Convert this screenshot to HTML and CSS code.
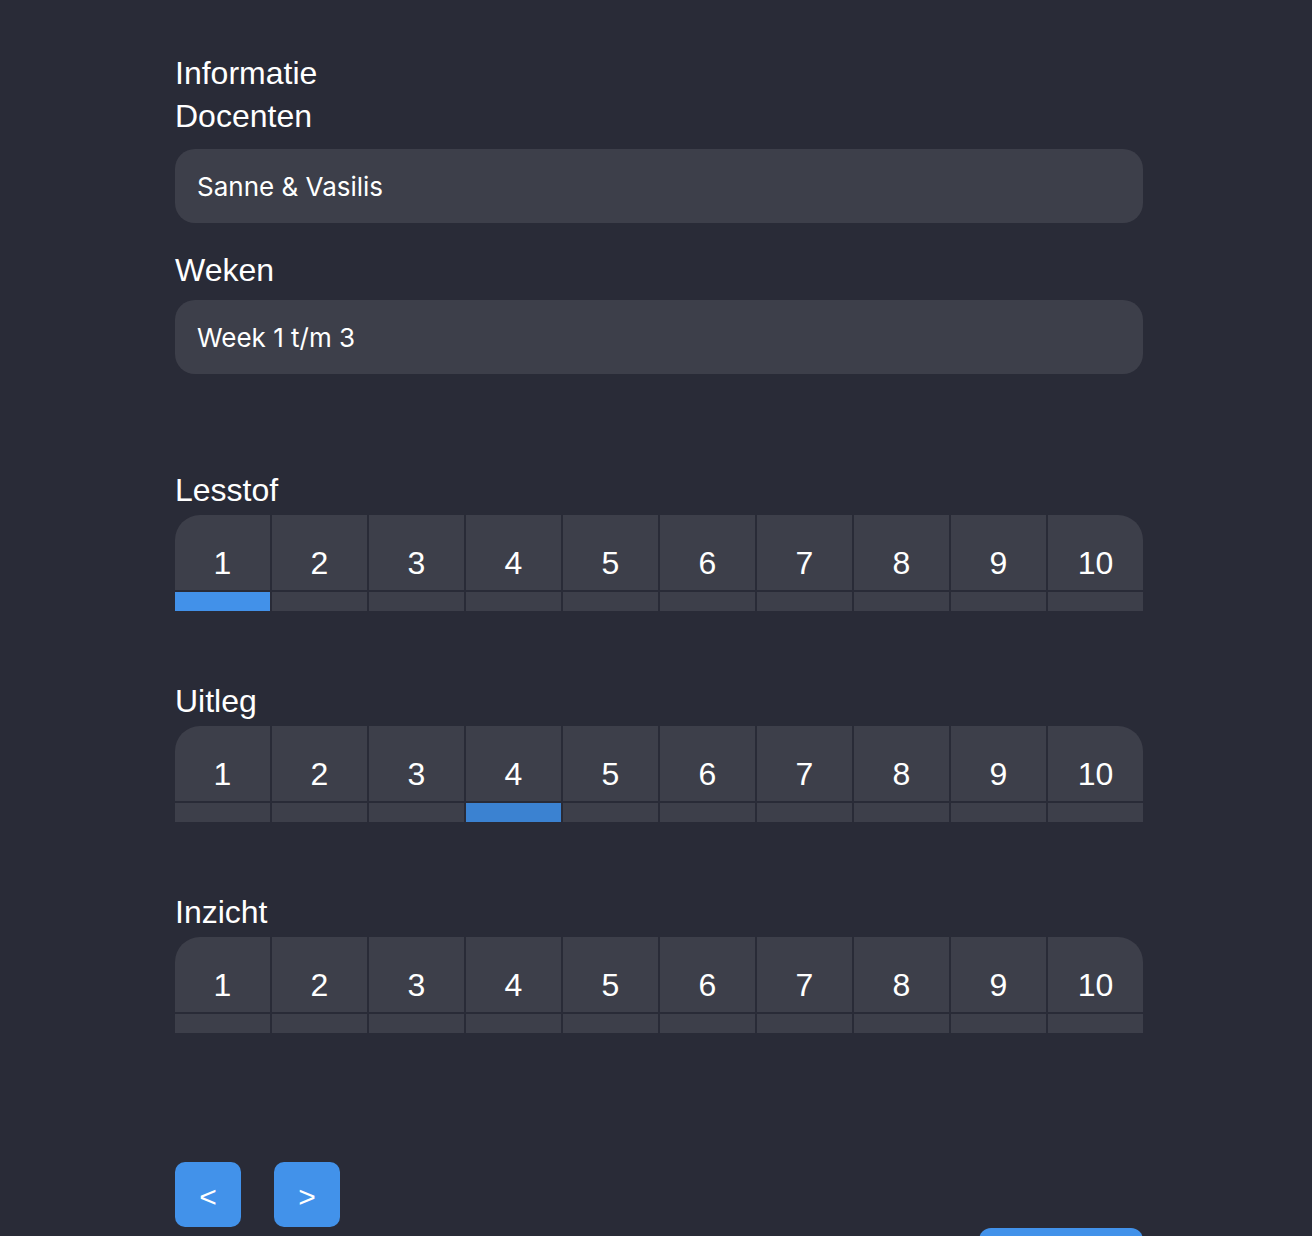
FILE: index.html
```html
<!DOCTYPE html>
<html lang="nl">
<head>
<meta charset="utf-8">
<title>Informatie</title>
<link rel="stylesheet" href="styles.css">
</head>
<body>
<main class="page">
  <h2 class="heading">Informatie</h2>
  <div class="field-group field-group--first">
    <div class="label">Docenten</div>
    <div class="field">Sanne &amp; Vasilis</div>
  </div>
  <div class="field-group">
    <div class="label">Weken</div>
    <div class="field">Week 1 t/m 3</div>
  </div>

  <section class="rating rating--first">
    <div class="label label--scale">Lesstof</div>
    <div class="scale">
      <div class="step selected"><div class="num">1</div><div class="bar"></div></div>
      <div class="step"><div class="num">2</div><div class="bar"></div></div>
      <div class="step"><div class="num">3</div><div class="bar"></div></div>
      <div class="step"><div class="num">4</div><div class="bar"></div></div>
      <div class="step"><div class="num">5</div><div class="bar"></div></div>
      <div class="step"><div class="num">6</div><div class="bar"></div></div>
      <div class="step"><div class="num">7</div><div class="bar"></div></div>
      <div class="step"><div class="num">8</div><div class="bar"></div></div>
      <div class="step"><div class="num">9</div><div class="bar"></div></div>
      <div class="step"><div class="num">10</div><div class="bar"></div></div>
    </div>
  </section>

  <section class="rating">
    <div class="label label--scale">Uitleg</div>
    <div class="scale">
      <div class="step"><div class="num">1</div><div class="bar"></div></div>
      <div class="step"><div class="num">2</div><div class="bar"></div></div>
      <div class="step"><div class="num">3</div><div class="bar"></div></div>
      <div class="step selected selected--alt"><div class="num">4</div><div class="bar"></div></div>
      <div class="step"><div class="num">5</div><div class="bar"></div></div>
      <div class="step"><div class="num">6</div><div class="bar"></div></div>
      <div class="step"><div class="num">7</div><div class="bar"></div></div>
      <div class="step"><div class="num">8</div><div class="bar"></div></div>
      <div class="step"><div class="num">9</div><div class="bar"></div></div>
      <div class="step"><div class="num">10</div><div class="bar"></div></div>
    </div>
  </section>

  <section class="rating">
    <div class="label label--scale">Inzicht</div>
    <div class="scale">
      <div class="step"><div class="num">1</div><div class="bar"></div></div>
      <div class="step"><div class="num">2</div><div class="bar"></div></div>
      <div class="step"><div class="num">3</div><div class="bar"></div></div>
      <div class="step"><div class="num">4</div><div class="bar"></div></div>
      <div class="step"><div class="num">5</div><div class="bar"></div></div>
      <div class="step"><div class="num">6</div><div class="bar"></div></div>
      <div class="step"><div class="num">7</div><div class="bar"></div></div>
      <div class="step"><div class="num">8</div><div class="bar"></div></div>
      <div class="step"><div class="num">9</div><div class="bar"></div></div>
      <div class="step"><div class="num">10</div><div class="bar"></div></div>
    </div>
  </section>

  <nav class="pager">
    <button class="btn btn--nav" type="button">&lt;</button>
    <button class="btn btn--nav" type="button">&gt;</button>
  </nav>
  <div class="submit-row">
    <button class="btn btn--submit" type="button" aria-label="Verstuur"></button>
  </div>
</main>
</body>
</html>
```
FILE: styles.css
```css
* { box-sizing: border-box; }

html, body {
  margin: 0;
  background: #292b37;
}

body {
  color: #ffffff;
  font-family: "Liberation Sans", Arial, Helvetica, sans-serif;
}

.page {
  width: 968px;
  margin-left: 175px;
  padding-top: 50px;
  padding-bottom: 40px;
}

.heading,
.label {
  margin: 0;
  height: 43px;
  padding-top: 4px;
  font-size: 32px;
  font-weight: normal;
  line-height: 39px;
}

.field-group .label {
  margin-bottom: 10px;
}

.field-group--first .label {
  margin-bottom: 13px;
}

.field-group--first {
  margin-bottom: 24px;
}

.field {
  height: 74px;
  display: flex;
  align-items: center;
  padding: 0 22px;
  background: #3d3f4a;
  border-radius: 20px;
  font-family: Inter, "Liberation Sans", sans-serif;
  font-size: 26px;
  font-weight: 400;
  color: #ffffff;
}

.rating {
  margin-bottom: 67px;
}

.rating--first {
  margin-top: 93px;
}

.label--scale {
  margin-bottom: 5px;
}

.scale {
  display: grid;
  grid-template-columns: repeat(10, 1fr);
  column-gap: 2px;
  border-radius: 25px 25px 0 0;
  overflow: hidden;
}

.step {
  display: flex;
  flex-direction: column;
  gap: 2px;
}

.num {
  height: 75px;
  padding-top: 30px;
  background: #3d3f4a;
  text-align: center;
  font-size: 32px;
  line-height: 36px;
}

.bar {
  height: 19px;
  background: #3d3f4a;
}

.selected .bar {
  background: #4291e9;
}

.selected--alt .bar {
  background: #3b82d1;
}

.pager {
  display: flex;
  gap: 33px;
  margin-top: 129px;
}

.btn {
  border: none;
  background: #4292ea;
  color: #ffffff;
  font-family: "Liberation Sans", Arial, sans-serif;
  cursor: pointer;
}

.btn--nav {
  width: 66px;
  height: 65px;
  border-radius: 10px;
  font-size: 30px;
  font-weight: normal;
  line-height: 30px;
  padding: 4px 0 0;
}

.submit-row {
  display: flex;
  justify-content: flex-end;
  margin-top: 1px;
}

.btn--submit {
  width: 164px;
  height: 65px;
  border-radius: 12px;
}
```
